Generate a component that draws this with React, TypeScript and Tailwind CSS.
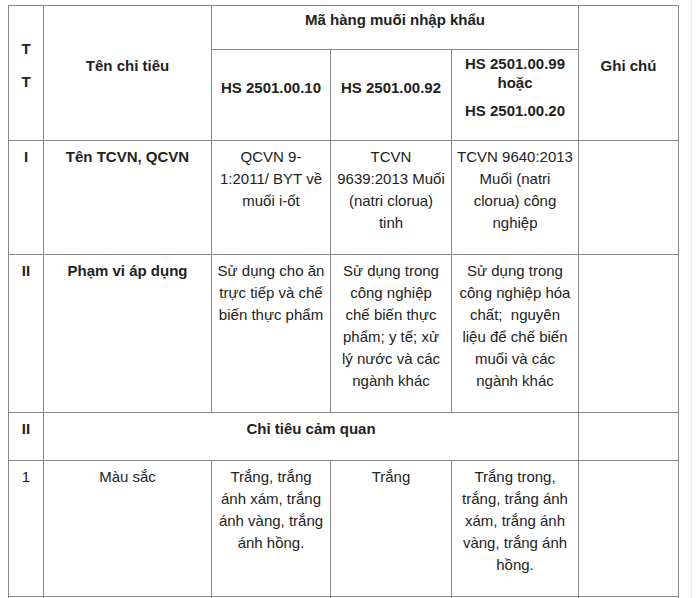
import React from "react";

const B = "border border-[#868686]";
const H = `${B} align-middle text-center font-bold leading-[18px] pt-[5px] pb-[20px] px-[5px]`;
const C = `${B} align-top text-center leading-[22px] pt-[5px] pb-[20px] px-[5px]`;

export default function App() {
  return (
    <div className="w-[696px] h-[598px] overflow-hidden bg-white flex font-['Liberation_Sans',Arial,sans-serif] text-[15px] text-[#222]">
      <div className="w-[691px] pl-[8px] pt-[5px]">
        <table className="table-fixed border-collapse w-[670px]">
          <colgroup>
            <col className="w-[35px]" />
            <col className="w-[168px]" />
            <col className="w-[119px]" />
            <col className="w-[121px]" />
            <col className="w-[127px]" />
            <col className="w-[100px]" />
          </colgroup>
          <thead>
            <tr>
              <th rowSpan={2} className={H}>
                <div>T</div>
                <div className="mt-[14.5px]">T</div>
              </th>
              <th rowSpan={2} className={H}>Tên chỉ tiêu</th>
              <th colSpan={3} className={`${B} align-top text-center font-bold leading-[18px] pt-[5px] pb-[20px] px-[5px]`}>
                Mã hàng muối nhập khẩu
              </th>
              <th rowSpan={2} className={H}>Ghi chú</th>
            </tr>
            <tr>
              <th className={H}>HS 2501.00.10</th>
              <th className={H}>HS 2501.00.92</th>
              <th className={H}>
                <div className="leading-[18.5px]">
                  HS 2501.00.99
                  <br />
                  hoặc
                </div>
                <div className="mt-[10px]">HS 2501.00.20</div>
              </th>
            </tr>
          </thead>
          <tbody>
            <tr>
              <td className={`${C} font-bold`}>I</td>
              <td className={`${C} font-bold`}>Tên TCVN, QCVN</td>
              <td className={C}>
                QCVN 9-
                <br />
                1:2011/ BYT về
                <br />
                muối i-ốt
              </td>
              <td className={C}>
                TCVN
                <br />
                9639:2013 Muối
                <br />
                (natri clorua)
                <br />
                tinh
              </td>
              <td className={C}>
                TCVN 9640:2013
                <br />
                Muối (natri
                <br />
                clorua) công
                <br />
                nghiệp
              </td>
              <td className={C}></td>
            </tr>
            <tr>
              <td className={`${C} font-bold`}>II</td>
              <td className={`${C} font-bold`}>Phạm vi áp dụng</td>
              <td className={C}>
                Sử dụng cho ăn
                <br />
                trực tiếp và chế
                <br />
                biến thực phẩm
              </td>
              <td className={C}>
                Sử dụng trong
                <br />
                công nghiệp
                <br />
                chế biến thực
                <br />
                phẩm; y tế; xử
                <br />
                lý nước và các
                <br />
                ngành khác
              </td>
              <td className={C}>
                Sử dụng trong
                <br />
                công nghiệp hóa
                <br />
                chất;&nbsp; nguyên
                <br />
                liệu để chế biến
                <br />
                muối và các
                <br />
                ngành khác
              </td>
              <td className={C}></td>
            </tr>
            <tr>
              <td className={`${C} font-bold`}>II</td>
              <td colSpan={4} className={`${C} font-bold`}>Chỉ tiêu cảm quan</td>
              <td className={C}></td>
            </tr>
            <tr>
              <td className={C}>1</td>
              <td className={C}>Màu sắc</td>
              <td className={C}>
                Trắng, trắng
                <br />
                ánh xám, trắng
                <br />
                ánh vàng, trắng
                <br />
                ánh hồng.
              </td>
              <td className={C}>Trắng</td>
              <td className={C}>
                Trắng trong,
                <br />
                trắng, trắng ánh
                <br />
                xám, trắng ánh
                <br />
                vàng, trắng ánh
                <br />
                hồng.
              </td>
              <td className={C}></td>
            </tr>
            <tr>
              <td className={C}>&nbsp;</td>
              <td className={C}>&nbsp;</td>
              <td className={C}>&nbsp;</td>
              <td className={C}>&nbsp;</td>
              <td className={C}>&nbsp;</td>
              <td className={C}>&nbsp;</td>
            </tr>
          </tbody>
        </table>
      </div>
      <div className="w-px h-full bg-[#ececec]" />
    </div>
  );
}
